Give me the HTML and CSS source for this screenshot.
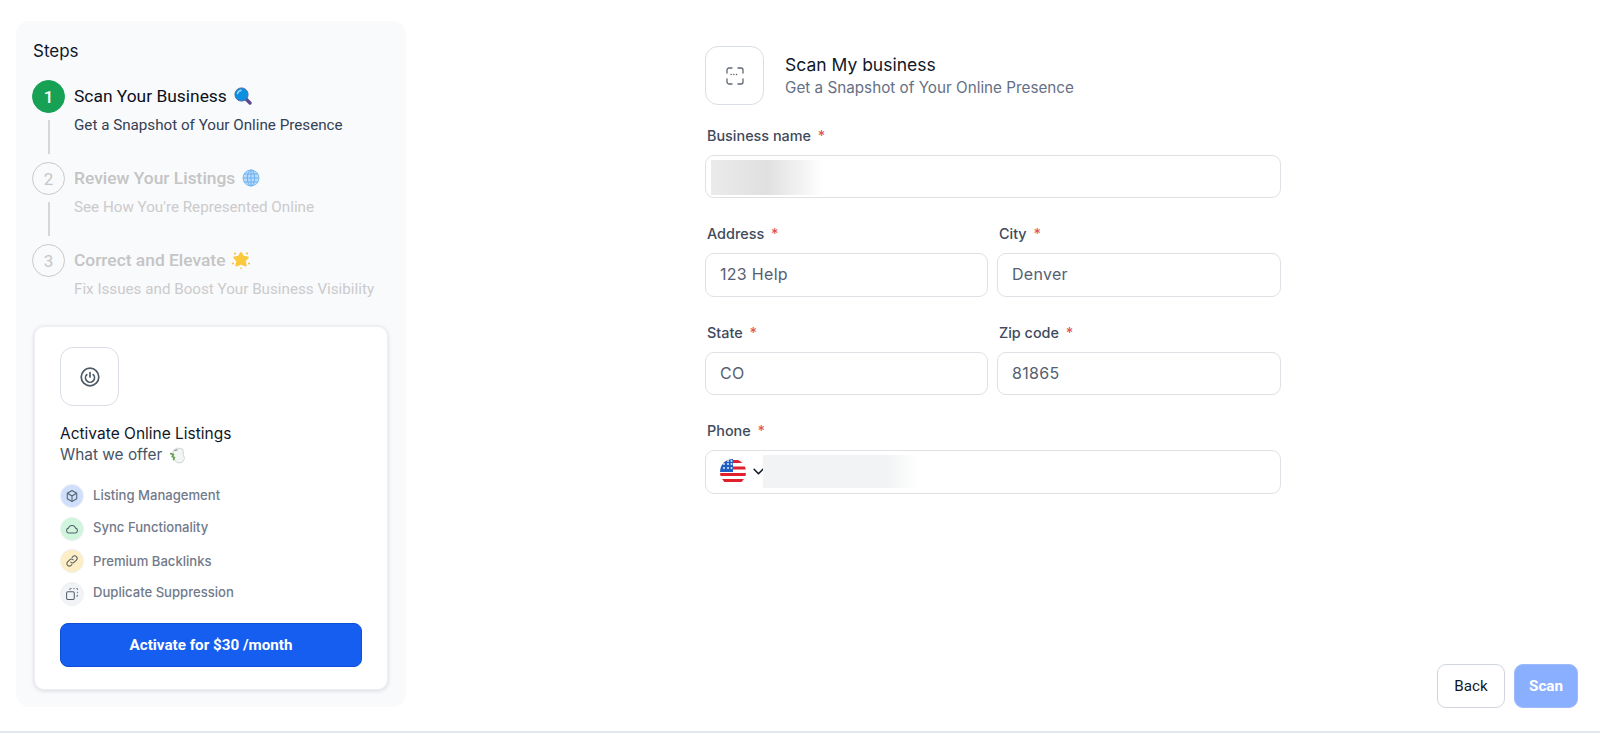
FILE: index.html
```html
<!DOCTYPE html>
<html lang="en">
<head>
<meta charset="utf-8">
<title>Scan My business</title>
<link rel="stylesheet" href="styles.css">
</head>
<body>
<div class="app">
  <aside class="sidebar">
    <div class="steps-title">Steps</div>
    <div class="step active">
      <div class="rail"><div class="num">1</div><div class="line"></div></div>
      <div class="step-text">
        <div class="step-title">Scan Your Business
          <svg class="emoji" viewBox="0 0 18 18"><path d="M11 11l5 5" stroke="#5c4a91" stroke-width="3.4" stroke-linecap="round"/><circle cx="7.5" cy="7.5" r="6.6" fill="#0b8fe0"/><circle cx="7.5" cy="7.5" r="6.6" fill="none" stroke="#4f6fa8" stroke-width="1"/><path d="M3.6 6.5A4 4 0 0 1 7 3.4" stroke="#8fd6fa" stroke-width="1.6" fill="none" stroke-linecap="round"/></svg>
        </div>
        <div class="step-sub">Get a Snapshot of Your Online Presence</div>
      </div>
    </div>
    <div class="step">
      <div class="rail"><div class="num">2</div><div class="line"></div></div>
      <div class="step-text">
        <div class="step-title">Review Your Listings
          <svg class="emoji" viewBox="0 0 18 18"><circle cx="9" cy="9" r="8" fill="#b9dcfb" stroke="#80bdf3" stroke-width="1"/><g fill="none" stroke="#6db0ef" stroke-width="1"><ellipse cx="9" cy="9" rx="3.6" ry="8"/><path d="M9 1v16M1 9h16M2 5h14M2 13h14"/></g></svg>
        </div>
        <div class="step-sub">See How You're Represented Online</div>
      </div>
    </div>
    <div class="step">
      <div class="rail"><div class="num">3</div></div>
      <div class="step-text">
        <div class="step-title">Correct and Elevate
          <svg class="emoji" viewBox="0 0 18 18"><path d="M9 2l2.300 3.800 4.500.6-3 3.400.8 4.700L9 12.500l-4.600 2 .8-4.700-3-3.400 4.500-.6z" fill="#fbc93d" stroke="#fbc93d" stroke-width="2" stroke-linejoin="round"/><g fill="#f9b82e"><circle cx="3" cy="2.500" r="1"/><circle cx="15" cy="2.500" r="1"/><circle cx="1" cy="12.500" r=".9"/><circle cx="17" cy="12.500" r=".9"/><circle cx="9" cy="17.200" r=".8"/></g></svg>
        </div>
        <div class="step-sub">Fix Issues and Boost Your Business Visibility</div>
      </div>
    </div>

    <section class="card">
      <div class="icon-box">
        <svg class="power" viewBox="0 0 20 20" fill="none" stroke="#4f5b67" stroke-width="1.700" stroke-linecap="round"><circle cx="10" cy="10" r="8.800"/><path d="M10 5.500v4.500M6.800 7.600a4.500 4.500 0 1 0 6.400 0"/></svg>
      </div>
      <div class="card-title">Activate Online Listings</div>
      <div class="card-sub">What we offer
        <svg class="emoji leaf" viewBox="0 0 16 16"><path d="M5 3l4-2 5 1 .5 5 1 4-2 3.500-4 .5-3-2-2-4z" fill="#f4f5f5" stroke="#c9cdd0" stroke-width=".8"/><path d="M2 6l3 1-1 2 2 1-1 2.500" stroke="#5f9e4b" stroke-width="1.500" fill="none"/><path d="M6 3.500l3-1" stroke="#888" stroke-width="1"/></svg>
      </div>
      <ul class="offer-list">
        <li class="offer">
          <span class="badge badge-blue"><svg viewBox="0 0 16 16" fill="none" stroke="#55606e" stroke-width="1.200" stroke-linejoin="round"><path d="M8 1.800l5.400 3v6.400L8 14.200l-5.400-3V4.800z"/><path d="M2.800 4.900L8 8l5.200-3.100M8 8v6"/></svg></span>
          <span class="offer-text">Listing Management</span>
        </li>
        <li class="offer offer-high">
          <span class="badge badge-green"><svg viewBox="0 0 16 16" fill="none" stroke="#55606e" stroke-width="1.200" stroke-linejoin="round"><path d="M4.300 12.500a2.800 2.800 0 0 1-.4-5.500 4.300 4.300 0 0 1 8.200 0 2.800 2.800 0 0 1-.4 5.500z"/></svg></span>
          <span class="offer-text">Sync Functionality</span>
        </li>
        <li class="offer offer-low">
          <span class="badge badge-yellow"><svg viewBox="0 0 16 16" fill="none" stroke="#55606e" stroke-width="1.200" stroke-linecap="round"><path d="M6.600 9.400a2.800 2.800 0 0 0 4 0l2.400-2.400a2.800 2.800 0 0 0-4-4l-.9.900"/><path d="M9.400 6.600a2.800 2.800 0 0 0-4 0L3 9a2.800 2.800 0 0 0 4 4l.9-.9"/></svg></span>
          <span class="offer-text">Premium Backlinks</span>
        </li>
        <li class="offer offer-high">
          <span class="badge badge-gray"><svg viewBox="0 0 16 16" fill="none" stroke="#55606e" stroke-width="1.200" stroke-linejoin="round"><rect x="1.800" y="5.400" width="8.800" height="8.800" rx="1.500"/><path d="M6 1.800h1.500M9.500 1.800H11M13 1.800h1.200v1.500M14.200 5.500V7M14.200 9v1.500H13M5.500 3.500V1.800" stroke-width="1"/></svg></span>
          <span class="offer-text">Duplicate Suppression</span>
        </li>
      </ul>
      <button class="btn-activate" type="button">Activate for $30 /month</button>
    </section>
  </aside>

  <main class="main">
    <div class="form">
      <header class="form-head">
        <div class="icon-box">
          <svg class="scan" viewBox="0 0 20 20" fill="none" stroke="#5c6773" stroke-width="1.300" stroke-linecap="round"><path d="M2 7V4a2 2 0 0 1 2-2h3M13 2h3a2 2 0 0 1 2 2v3M18 13v3a2 2 0 0 1-2 2h-3M7 18H4a2 2 0 0 1-2-2v-3"/><path d="M6 8.500h8" stroke-dasharray=".2 2.500"/></svg>
        </div>
        <div>
          <div class="form-title">Scan My business</div>
          <div class="form-sub">Get a Snapshot of Your Online Presence</div>
        </div>
      </header>

      <div class="field">
        <div class="label">Business name <span class="req">*</span></div>
        <div class="input input-redacted"><span class="redact redact-name"></span></div>
      </div>

      <div class="row">
        <div class="field field-left">
          <div class="label">Address <span class="req">*</span></div>
          <div class="input">123 Help</div>
        </div>
        <div class="field">
          <div class="label">City <span class="req">*</span></div>
          <div class="input">Denver</div>
        </div>
      </div>

      <div class="row">
        <div class="field field-left">
          <div class="label">State <span class="req">*</span></div>
          <div class="input">CO</div>
        </div>
        <div class="field">
          <div class="label">Zip code <span class="req">*</span></div>
          <div class="input">81865</div>
        </div>
      </div>

      <div class="field">
        <div class="label">Phone <span class="req">*</span></div>
        <div class="input input-phone">
          <svg class="flag" viewBox="0 0 26 26">
            <defs><clipPath id="flagClip"><circle cx="13" cy="13" r="13"/></clipPath></defs>
            <g clip-path="url(#flagClip)">
              <rect width="26" height="26" fill="#fff"/>
              <path d="M0 1h26v3H0zM13 7.500h13v3H13zM0 14h26v3H0zM0 20h26v3H0z" fill="#e0202c"/>
              <rect width="13" height="13" fill="#1f5fc4"/>
              <g fill="#dfe8f6"><circle cx="4" cy="5" r="1"/><circle cx="8" cy="5" r="1"/><circle cx="11.500" cy="5" r="1"/><circle cx="4" cy="9" r="1"/><circle cx="8" cy="9" r="1"/><circle cx="11.500" cy="9" r="1"/><circle cx="8" cy="2" r="1"/><circle cx="11.500" cy="2" r="1"/></g>
            </g>
          </svg>
          <svg class="chev" viewBox="0 0 10 6" fill="none" stroke="#111827" stroke-width="1.400" stroke-linecap="round" stroke-linejoin="round"><path d="M1 1l4 4 4-4"/></svg>
          <span class="redact redact-phone"></span>
        </div>
      </div>
    </div>

    <footer class="actions">
      <button class="btn btn-back" type="button">Back</button>
      <button class="btn btn-scan" type="button">Scan</button>
    </footer>
  </main>
</div>
</body>
</html>
```
FILE: styles.css
```css
* { box-sizing: border-box; }
html, body { margin: 0; padding: 0; background: #fff; }
body { font-family: "Inter", "Liberation Sans", sans-serif; color: #101828; overflow: hidden; }

.app { display: flex; height: 733px; border-bottom: 2px solid #e2e6ea; }

.sidebar {
  width: 390px; height: 686px; margin: 21px 0 0 16px;
  padding: 18px 18px 18px 16px;
  background: #f9fafc; border-radius: 14px; flex: none;
}
.steps-title { font-size: 17px; line-height: 24px; margin: 0 0 17px 1px; color: #101828; }

.step { display: flex; gap: 9px; height: 82px; }
.rail { width: 33px; flex: none; display: flex; flex-direction: column; align-items: center; }
.num {
  width: 33px; height: 33px; border-radius: 50%; flex: none;
  display: flex; align-items: center; justify-content: center;
  font-family: "Roboto", sans-serif; font-size: 17px; color: #c6c6c6;
  border: 1.5px solid #c9c9c9;
}
.line { width: 2px; height: 34px; margin-top: 7px; background: #d6d6d6; }
.step-text { padding-top: 4px; }
.step-title {
  font-family: "Roboto", sans-serif; font-weight: 500; font-size: 17.400px; line-height: 24px;
  color: #c4c4c4; display: flex; align-items: center; gap: 7px;
}
.step-sub {
  font-family: "Roboto", sans-serif; font-size: 15.200px; line-height: 20px;
  margin-top: 7px; color: #cbcbcb; white-space: nowrap;
}
.step.active .step-sub { color: #344054; }
.step.active .num { background: #16a155; border-color: #16a155; color: #fff; font-weight: 500; }
.step.active .step-title { color: #0b0f1a; font-weight: 450; }
.emoji { width: 18px; height: 18px; flex: none; }

.card {
  margin-left: 2px; height: 364px;
  padding: 20px 25px 0; background: #fff;
  border: 1px solid #eceef2; border-radius: 10px;
  box-shadow: 0 1px 4px rgba(16, 24, 40, .14);
}
.icon-box {
  width: 59px; height: 59px; flex: none;
  border: 1px solid #d9dde5; border-radius: 13px; background: #fff;
  display: flex; align-items: center; justify-content: center;
}
.power { width: 20px; height: 20px; }
.scan { width: 20px; height: 20px; }
.card-title { font-size: 15.500px; line-height: 22px; margin-top: 17px; color: #101828; white-space: nowrap; }
.card-sub { font-size: 15.400px; line-height: 22px; margin-top: -1px; color: #475467; display: flex; align-items: center; gap: 6px; }
.leaf { width: 17px; height: 17px; }

.offer-list { list-style: none; margin: 18px 0 0; padding: 0; display: flex; flex-direction: column; gap: 8.670px; }
.offer { display: flex; gap: 9px; align-items: flex-start; height: 24px; }
.badge {
  width: 24px; height: 24px; border-radius: 50%; flex: none;
  display: flex; align-items: center; justify-content: center;
  border: 1px solid #eef0f3;
}
.badge svg { width: 14px; height: 14px; }
.badge-blue { background: #cfdefa; }
.badge-green { background: #cff5dc; }
.badge-yellow { background: #fdeec4; }
.badge-gray { background: #f1f3f6; }
.offer-text { font-size: 13.100px; font-weight: 500; line-height: 22px; color: #717a8a; white-space: nowrap; }
.offer-high .offer-text { margin-top: -1px; }
.offer-low .offer-text { margin-top: 1px; }

.btn-activate {
  display: block; width: 302px; height: 44px; margin-top: 17px;
  background: #155eef; border: 1px solid #0f4fd8; border-radius: 8px;
  color: #fff; font-family: "Roboto", sans-serif; font-weight: 700; font-size: 15.200px;
}

.main { flex: 1; min-width: 0; display: flex; flex-direction: column; }
.form { width: 576px; margin: 46px 0 0 299px; }
.form-head { display: flex; align-items: center; gap: 21px; margin-bottom: 21px; }
.form-title { font-size: 17.500px; font-weight: 400; line-height: 24px; color: #101828; }
.form-sub { font-size: 15.250px; line-height: 22px; color: #667085; white-space: nowrap; }

.field { margin-bottom: 26px; flex: 1; min-width: 0; }
.field-left { flex: 0 0 283px; }
.row { display: flex; gap: 9px; }
.label { font-size: 14.400px; font-weight: 500; line-height: 20px; margin: 0 0 9px 2px; color: #3e4a5c; }
.req { color: #e0525a; margin-left: 3px; }
.input {
  height: 43.400px; border: 1px solid #dfe1e6; border-radius: 9px; background: #fff;
  padding: 0 14px; font-size: 16px; letter-spacing: .3px; line-height: 41px; color: #556072;
}
.input-redacted { padding: 4px 5px; }
.input-phone { display: flex; align-items: center; padding: 0 0 0 14px; }
.redact { display: block; }
.redact-name { width: 112px; height: 35px; background: linear-gradient(90deg, #ebebeb 0%, #e0e0e0 50%, #fff 100%); }
.redact-phone { width: 155px; height: 33px; margin-left: -1px; background: linear-gradient(90deg, #f2f3f4 0%, #f2f3f4 80%, #fff 100%); }
.flag { width: 26px; height: 26px; flex: none; }
.chev { width: 11px; height: 7px; margin-left: 7px; flex: none; }

.actions { margin-top: auto; align-self: flex-end; display: flex; gap: 9px; padding: 0 22px 23px 0; }
.btn { height: 44px; border-radius: 9px; font-family: "Roboto", sans-serif; font-size: 15.200px; font-weight: 400; }
.btn-back { width: 68px; background: #fff; border: 1px solid #d0d5dd; color: #101828; }
.btn-scan { width: 64px; background: #8bafff; border: 1px solid #9dbbfb; color: #fff; font-weight: 700; }
```
